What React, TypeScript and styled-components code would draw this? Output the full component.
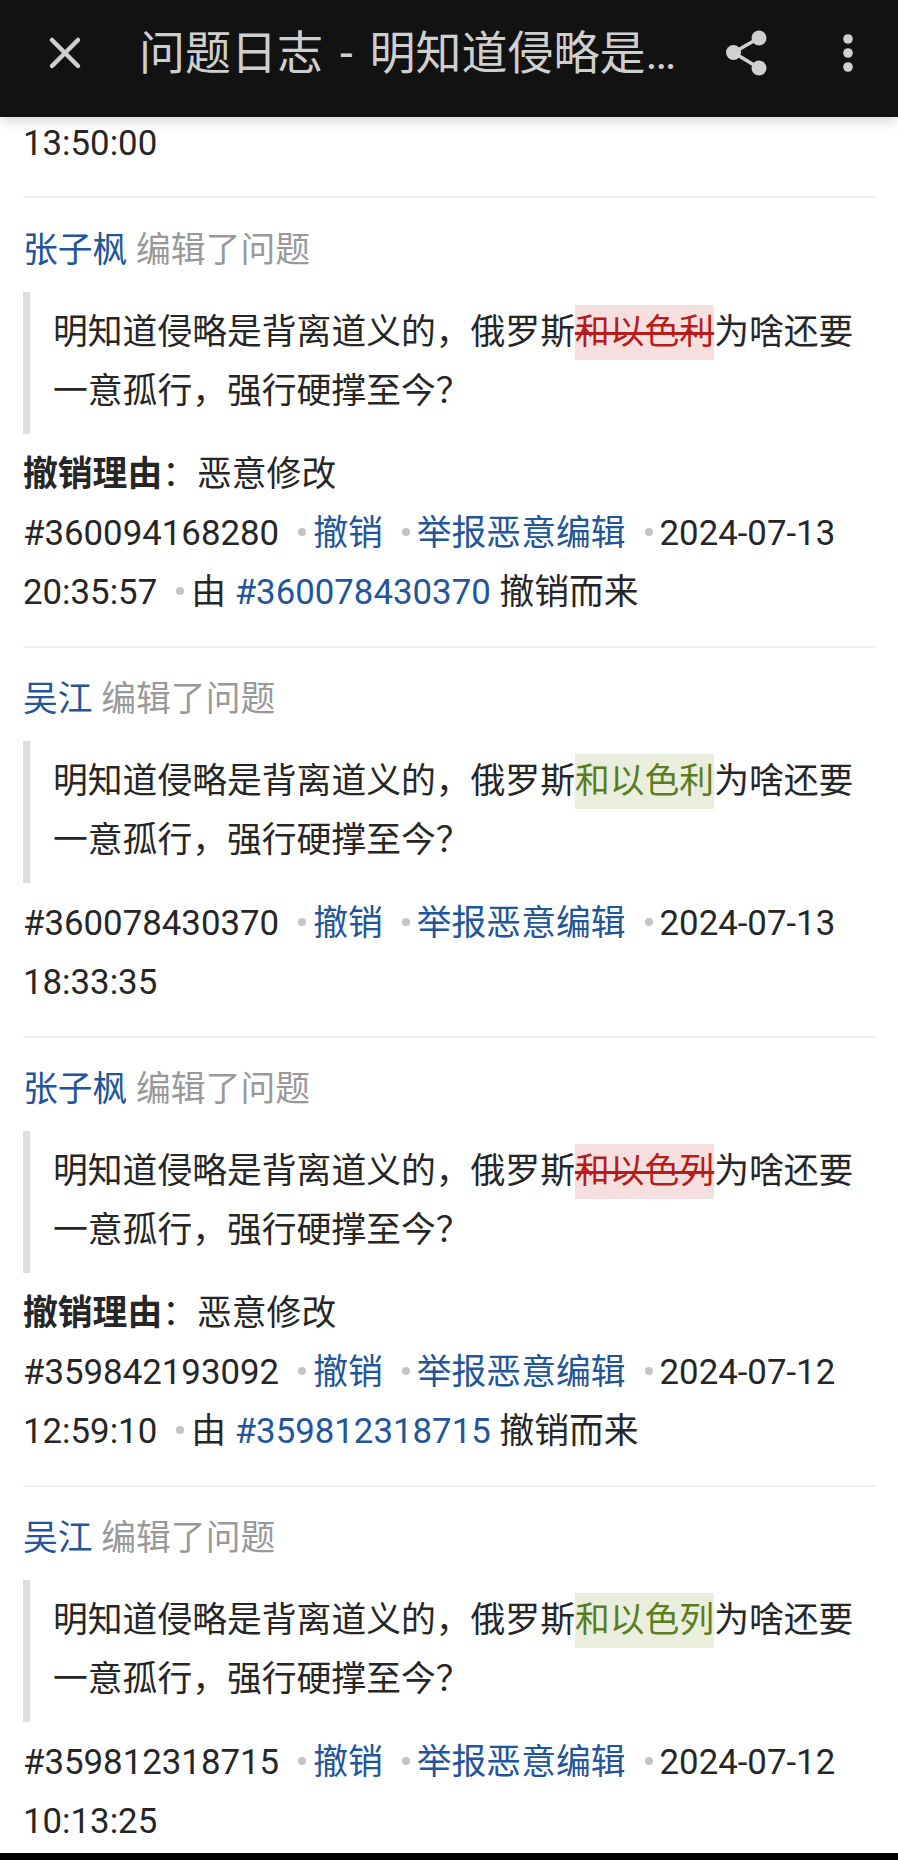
import React from "react"
import styled, { createGlobalStyle } from "styled-components"

const GlobalStyle = createGlobalStyle`
  html, body {
    margin: 0;
    padding: 0;
    background: #fff;
  }
`

const Page = styled.div`
  display: flex;
  flex-direction: column;
  width: 898px;
  height: 1860px;
  overflow: hidden;
  background: #fff;
  font-family: Roboto, "Noto Sans CJK SC", sans-serif;
  font-size: 34.8px;
  line-height: 59px;
  color: #262626;
`

const Header = styled.header`
  position: relative;
  z-index: 2;
  display: flex;
  align-items: flex-start;
  flex: 0 0 117px;
  background: #121212;
  box-shadow: 0 3px 12px rgba(0, 0, 0, 0.18);
`

const IconButton = styled.div<{ $width: number }>`
  display: flex;
  align-items: center;
  justify-content: center;
  flex: 0 0 ${({ $width }) => $width}px;
  height: 106px;
`

const Title = styled.div`
  flex: 1;
  min-width: 0;
  margin: 0 8px 0 9px;
  height: 106px;
  font-size: 46px;
  line-height: 106px;
  word-spacing: 5.5px;
  color: #cfcfcf;
  white-space: nowrap;
  overflow: hidden;
  text-overflow: ellipsis;
`

const Content = styled.main`
  flex: 1;
  min-height: 0;
  overflow: hidden;
  margin-top: -3px;
  padding: 0 22px 0 23px;
`

const Entry = styled.section`
  padding: 22px 0 24px;
  border-bottom: 2px solid #f0f0f0;
  &:first-child {
    padding: 0 0 23px;
  }
  &:nth-child(2) {
    padding-top: 23px;
  }
  &:last-child {
    border-bottom: 0;
  }
`

const Author = styled.div`
  margin-bottom: 12px;
  color: #999;
`

const Link = styled.a`
  color: #225599;
  text-decoration: none;
`

const Quote = styled.blockquote`
  margin: 0 0 11px;
  padding: 11px 0 13px 23px;
  border-left: 7px solid #dedede;
`

const Removed = styled.del`
  display: inline-block;
  height: 55px;
  line-height: 55px;
  background: #f6dfdf;
  color: #b71c1c;
  text-decoration: line-through;
`

const Added = styled.ins`
  display: inline-block;
  height: 55px;
  line-height: 55px;
  background: #e9efdc;
  color: #5c7c22;
  text-decoration: none;
`

const Label = styled.strong`
  font-weight: 700;
`

const Dot = styled.span`
  display: inline-block;
  width: 8px;
  height: 8px;
  margin: 0 7px 0 19px;
  border-radius: 50%;
  background: #c4c4c4;
  vertical-align: 0.27em;
`

const BottomBar = styled.div`
  flex: 0 0 7px;
  background: #000;
`

const CloseIcon = () => (
  <svg width="36" height="36" viewBox="0 0 36 36">
    <path d="M5 5 L31 31 M31 5 L5 31" stroke="#d0d0d0" strokeWidth="4.5" strokeLinecap="round" fill="none" />
  </svg>
)

const ShareIcon = () => (
  <svg width="44" height="46" viewBox="0 0 44 46" fill="#d0d0d0">
    <circle cx="33" cy="8" r="7.5" />
    <circle cx="7.5" cy="22.5" r="7.5" />
    <circle cx="33" cy="38" r="7.5" />
    <path d="M33 8 L7.5 22.5 L33 38" stroke="#d0d0d0" strokeWidth="3.5" fill="none" />
  </svg>
)

const MoreIcon = () => (
  <svg width="12" height="38" viewBox="0 0 12 38" fill="#d0d0d0">
    <circle cx="6" cy="5" r="4.8" />
    <circle cx="6" cy="19" r="4.8" />
    <circle cx="6" cy="33" r="4.8" />
  </svg>
)

interface Revision {
  author: string
  word: string
  added: boolean
  id: string
  date: string
  revertOf?: string
}

const revisions: Revision[] = [
  { author: "张子枫", word: "和以色利", added: false, id: "360094168280", date: "2024-07-13 20:35:57", revertOf: "360078430370" },
  { author: "吴江", word: "和以色利", added: true, id: "360078430370", date: "2024-07-13 18:33:35" },
  { author: "张子枫", word: "和以色列", added: false, id: "359842193092", date: "2024-07-12 12:59:10", revertOf: "359812318715" },
  { author: "吴江", word: "和以色列", added: true, id: "359812318715", date: "2024-07-12 10:13:25" },
]

const RevisionEntry: React.FC<{ item: Revision }> = ({ item }) => (
  <Entry>
    <Author>
      <Link>{item.author}</Link> 编辑了问题
    </Author>
    <Quote>
      明知道侵略是背离道义的，俄罗斯
      {item.added ? <Added>{item.word}</Added> : <Removed>{item.word}</Removed>}
      为啥还要一意孤行，强行硬撑至今？
    </Quote>
    {item.revertOf && (
      <div>
        <Label>撤销理由</Label>：恶意修改
      </div>
    )}
    <div>
      #{item.id}
      <Dot />
      <Link>撤销</Link>
      <Dot />
      <Link>举报恶意编辑</Link>
      <Dot />
      {item.date}
      {item.revertOf && (
        <>
          <Dot />由 <Link>#{item.revertOf}</Link> 撤销而来
        </>
      )}
    </div>
  </Entry>
)

const App: React.FC = () => (
  <Page>
    <GlobalStyle />
    <Header>
      <IconButton $width={130}>
        <CloseIcon />
      </IconButton>
      <Title>问题日志 - 明知道侵略是背离道义的，俄罗斯为啥还要一意孤行</Title>
      <IconButton $width={100}>
        <ShareIcon />
      </IconButton>
      <IconButton $width={100}>
        <MoreIcon />
      </IconButton>
    </Header>
    <Content>
      <Entry>13:50:00</Entry>
      {revisions.map((item) => (
        <RevisionEntry key={item.id} item={item} />
      ))}
    </Content>
    <BottomBar />
  </Page>
)

export default App
